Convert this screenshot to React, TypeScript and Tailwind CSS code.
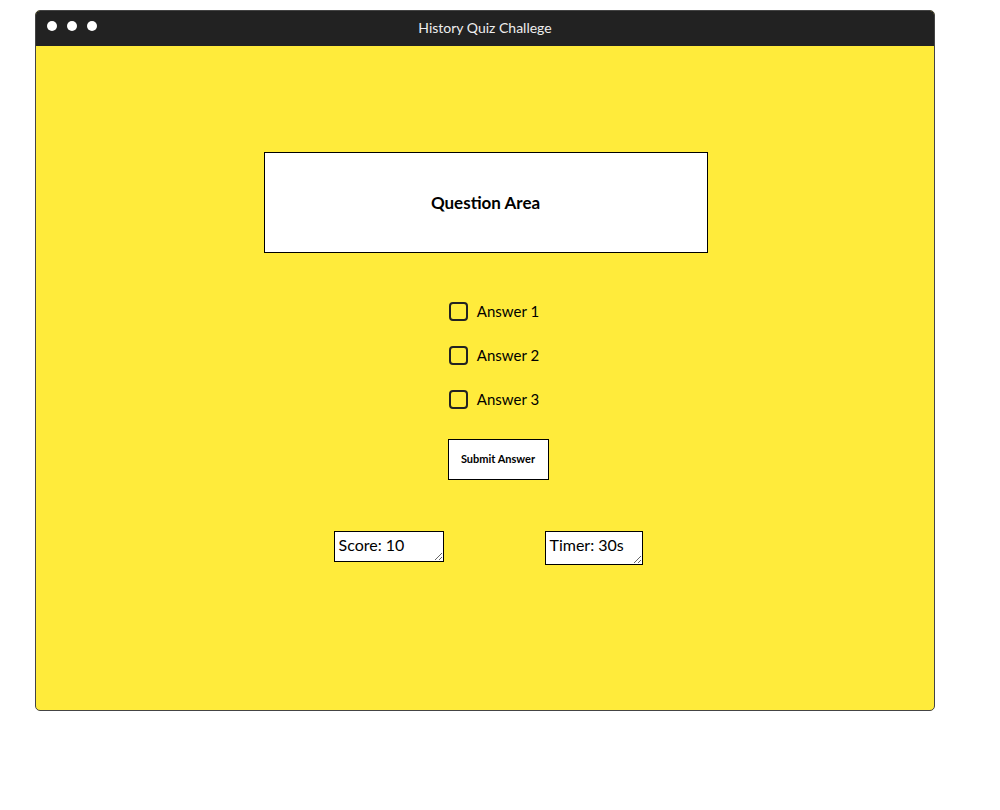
import React from "react";

export default function App() {
  const font = { fontFamily: '"Source Sans Pro", Lato, "Open Sans", sans-serif' };
  return (
    <div className="w-[1000px] h-[810px] bg-white" style={font}>
      <div className="pt-[10px] pl-[35px]">
        <div className="w-[900px] h-[701px] rounded-[5px] border border-[#444] overflow-hidden flex flex-col bg-[#ffeb3b]">
          <div className="h-[35px] bg-[#222222] flex items-center relative shrink-0">
            <div className="flex gap-[10px] pl-[11px] pb-[5px]">
              <span className="w-[10px] h-[10px] rounded-full bg-white" />
              <span className="w-[10px] h-[10px] rounded-full bg-white" />
              <span className="w-[10px] h-[10px] rounded-full bg-white" />
            </div>
            <div className="absolute inset-0 flex items-center justify-center text-[14px] text-[#eeeeee] pb-[3px]">
              History Quiz Challege
            </div>
          </div>
          <div className="flex-1 flex flex-col items-center pt-[106px]">
            <div className="w-[444px] h-[101px] bg-white border border-black flex items-center justify-center ml-[1px]">
              <span className="text-[17px] font-bold text-black">Question Area</span>
            </div>
            <div className="flex flex-col gap-[26px] mt-[49px] ml-[18px]">
              {["Answer 1", "Answer 2", "Answer 3"].map((a) => (
                <label key={a} className="flex items-center gap-[9px] h-[18px]">
                  <span className="w-[19px] h-[19px] rounded-[4px] border-2 border-[#222] box-border" />
                  <span className="text-[15px] text-black">{a}</span>
                </label>
              ))}
            </div>
            <button className="mt-[31px] ml-[26px] w-[101px] h-[41px] bg-white border border-black text-[11px] font-bold text-black">
              Submit Answer
            </button>
            <div className="flex gap-[101px] mt-[51px] ml-[6px] items-start">
              <textarea
                className="w-[110px] h-[31px] bg-white border border-black text-[16px] text-black px-[4px] py-0 leading-[26px] outline-none overflow-hidden"
                defaultValue="Score: 10"
              />
              <textarea
                className="w-[98px] h-[34px] bg-white border border-black text-[16px] text-black px-[4px] py-0 leading-[26px] outline-none overflow-hidden"
                defaultValue="Timer: 30s"
              />
            </div>
          </div>
        </div>
      </div>
    </div>
  );
}
